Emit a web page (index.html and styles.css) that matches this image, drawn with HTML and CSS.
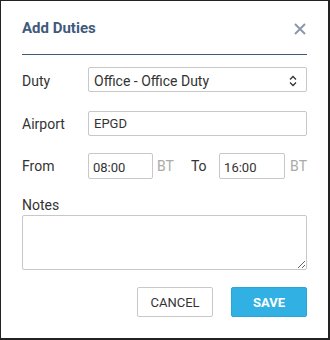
FILE: index.html
```html
<!DOCTYPE html>
<html>
<head>
<meta charset="utf-8">
<link rel="stylesheet" href="styles.css">
</head>
<body>
<div class="dialog">
  <div class="header">
    <h1 class="title">Add Duties</h1>
    <svg class="close" width="12" height="12" viewBox="0 0 12 12"><path d="M1 1 L11 11 M11 1 L1 11" stroke="#8c98aa" stroke-width="2" stroke-linecap="butt" fill="none"/></svg>
  </div>
  <div class="form">
    <div class="row row-duty">
      <label class="label">Duty</label>
      <div class="select">
        <span class="select-text">Office - Office Duty</span>
        <svg class="chev" width="8" height="12" viewBox="0 0 8 12"><path d="M1 4.5 L4 1.5 L7 4.5 M1 7.5 L4 10.5 L7 7.5" stroke="#333" stroke-width="1.3" fill="none"/></svg>
      </div>
    </div>
    <div class="row row-airport">
      <label class="label">Airport</label>
      <input class="input wide" type="text" value="EPGD">
    </div>
    <div class="row row-time">
      <label class="label">From</label>
      <input class="input time" type="text" value="08:00">
      <span class="unit">BT</span>
      <span class="to">To</span>
      <input class="input time time-to" type="text" value="16:00">
      <span class="unit unit-to">BT</span>
    </div>
    <div class="notes-label">Notes</div>
    <textarea class="notes"></textarea>
    <div class="actions">
      <button class="btn btn-cancel">CANCEL</button>
      <button class="btn btn-save">SAVE</button>
    </div>
  </div>
</div>
</body>
</html>
```
FILE: styles.css
```css
* { box-sizing: border-box; }
html, body { margin: 0; padding: 0; background: #fff; }
body { font-family: Roboto, "Liberation Sans", sans-serif; color: #333; }

.dialog {
  width: 330px;
  height: 340px;
  border: 1px solid #222;
  border-right-width: 2px;
  border-bottom-width: 2px;
  background: #fff;
  padding: 17px 21px 0 21px;
}

.header {
  display: flex;
  justify-content: space-between;
  align-items: center;
  height: 37px;
  padding-bottom: 16px;
  border-bottom: 1px solid #405a7c;
}
.title {
  margin: 0;
  font-size: 15px;
  line-height: 20px;
  font-weight: 700;
  color: #405a7c;
}
.close { margin-right: 1px; margin-top: 1px; }

.form { margin-top: 12px; }

.row {
  display: flex;
  align-items: center;
}
.row-duty { height: 25px; margin-bottom: 19px; }
.row-airport { height: 25px; margin-bottom: 17px; }
.row-time { height: 26px; margin-bottom: 17px; }

.label {
  width: 66px;
  font-size: 14px;
  line-height: 18px;
  color: #333;
  flex: none;
}
.row-duty .label { padding-top: 3px; }

.select {
  flex: 1;
  height: 25px;
  border: 1px solid #c8c8c8;
  border-radius: 2px;
  display: flex;
  align-items: center;
  justify-content: space-between;
  padding: 0 9px 0 5px;
}
.select-text { font-size: 14px; line-height: 18px; color: #333; padding-top: 3px; }
.chev { display: block; margin-top: 2px; }

.input {
  font-family: Roboto, "Liberation Sans", sans-serif;
  font-size: 13px;
  color: #333;
  border: 1px solid #c8c8c8;
  border-radius: 2px;
  padding: 0 5px;
  outline: none;
  background: #fff;
  margin: 0;
}
.input.wide { flex: 1; height: 25px; }
.input.time { width: 65px; height: 26px; padding-left: 4px; padding-top: 2px; }
.input.time-to { width: 66px; }

.unit {
  font-size: 14px;
  color: #aaa;
  margin-left: 4px;
  width: 17px;
}
.unit-to { margin-left: 5px; }
.to {
  font-size: 14px;
  color: #333;
  margin-left: 17px;
  width: 29px;
}

.notes-label {
  font-size: 14px;
  line-height: 18px;
  color: #333;
  margin-bottom: 1px;
}
.notes {
  display: block;
  width: 100%;
  height: 55px;
  border: 1px solid #c8c8c8;
  border-radius: 2px;
  margin: 0;
  font-family: Roboto, "Liberation Sans", sans-serif;
  font-size: 13px;
  outline: none;
}

.actions {
  display: flex;
  justify-content: flex-end;
  gap: 18px;
  margin-top: 17px;
}
.btn {
  width: 76px;
  height: 30px;
  border-radius: 2px;
  font-family: Roboto, "Liberation Sans", sans-serif;
  font-size: 13px;
  padding: 0;
  margin: 0;
  cursor: pointer;
}
.btn-cancel {
  background: #fff;
  border: 1px solid #c8c8c8;
  color: #333;
}
.btn-save {
  background: #31b1e3;
  border: 1px solid #2aa5d8;
  color: #fff;
  font-weight: 700;
}
```
